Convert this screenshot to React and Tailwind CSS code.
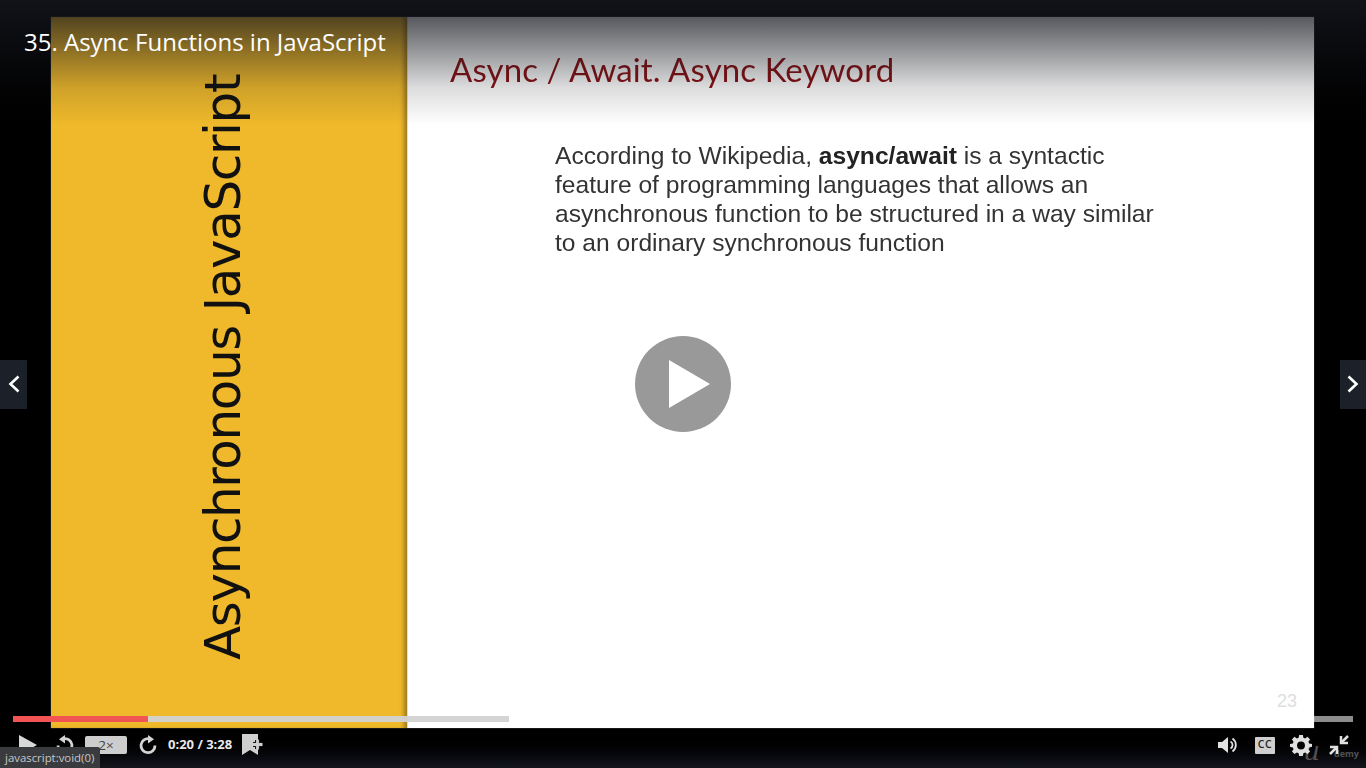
const Gear = () => (
  <svg width="22" height="22" viewBox="0 0 24 24" fill="#e0e0e0">
    <path fillRule="evenodd" d="M10 1h4l.6 3.1 1.900.8L19.100 3.100 21.900 5.900 20.100 8.500l.8 1.900L24 11v3l-3.100.6-.8 1.900 1.800 2.600-2.800 2.800-2.600-1.800-1.900.8L14 24h-4l-.6-3.100-1.900-.8-2.600 1.800-2.800-2.800 1.800-2.600-.8-1.900L0 14v-3l3.100-.6.8-1.900L2.100 5.900 4.900 3.100 7.500 4.900l1.900-.8L10 1zm2 7.200a4.300 4.300 0 1 0 0 8.600 4.300 4.300 0 0 0 0-8.600z" />
  </svg>
)

const RotateArrow = ({ flip }) => (
  <svg width="20" height="20" viewBox="0 0 20 20" className={flip ? '-scale-x-100' : ''} fill="none">
    <path d="M11.500 3.800A7 7 0 1 0 17 10.500" stroke="#d4d4d4" strokeWidth="2.800" />
    <path d="M10 0l6 4.300-6 4.200z" fill="#d4d4d4" />
  </svg>
)

const App = () => {
  return (
    <div className="relative w-[1366px] h-[768px] overflow-hidden bg-black font-['Open_Sans',sans-serif]">
      {/* Slide */}
      <div className="pt-[17px] pl-[51px]">
        <div className="flex w-[1263px] h-[711px] bg-white shadow-[0_0_1px_#8a8a8a]">
          <div className="flex w-[357px] justify-start border-r border-[#f3df9a] bg-[#efb92b] shadow-[inset_-5px_0_4px_-2px_rgba(90,70,20,0.55)]">
            <div className="ml-[142px] mt-[53px] h-[590px] font-['DejaVu_Sans',sans-serif] text-[50px] leading-[60px] text-[#111] blur-[0.6px] [writing-mode:vertical-rl] rotate-180 whitespace-nowrap text-left tracking-[-1.4px]">
              Asynchronous JavaScript
            </div>
          </div>
          <div className="relative flex-1">
            <h1 className="ml-[42px] mt-[30px] font-['Lato',sans-serif] text-[33px] leading-[44px] text-[#8a1014] blur-[0.5px] tracking-[0.1px] whitespace-nowrap">
              Async / Await. Async Keyword
            </h1>
            <p className="ml-[147px] mt-[50px] w-[640px] font-['Liberation_Sans',sans-serif] text-[24.6px] leading-[29px] text-[#333] blur-[0.3px]">
              According to Wikipedia, <b className="text-[#222]">async/await</b> is a syntactic<br />
              feature of programming languages that allows an<br />
              asynchronous function to be structured in a way similar<br />
              to an ordinary synchronous function
            </p>
            <div className="absolute right-[17px] bottom-[16px] font-['Liberation_Sans',sans-serif] text-[18px] leading-[22px] text-[#dedede]">23</div>
          </div>
        </div>
      </div>

      {/* Top shade and title */}
      <div className="absolute inset-x-0 top-0 h-[125px] bg-[linear-gradient(to_bottom,rgba(20,22,29,0.85)_0%,rgba(20,22,29,0.5)_35%,rgba(20,22,29,0.15)_70%,rgba(20,22,29,0)_100%)]" />
      <h2 className="absolute left-[24px] top-[25px] text-[24px] leading-[33px] text-white">35. Async Functions in JavaScript</h2>

      {/* Big play */}
      <div className="absolute left-[635px] top-[336px] flex h-[96px] w-[96px] items-center justify-center rounded-full bg-[#999]">
        <svg width="42" height="48" viewBox="0 0 42 48" className="ml-[13px]"><path d="M0 0l41 24L0 48z" fill="#fff" /></svg>
      </div>

      {/* Prev / next */}
      <div className="absolute left-0 top-[360px] flex h-[49px] w-[27px] items-center justify-center bg-[#1c2129]">
        <svg width="12" height="18" viewBox="0 0 12 18" fill="none" className="mb-[2px]"><path d="M10.500 1.500L2.500 9l8 7.500" stroke="#fff" strokeWidth="2.600" /></svg>
      </div>
      <div className="absolute right-0 top-[360px] flex h-[49px] w-[26px] items-center justify-center bg-[#1c2129]">
        <svg width="12" height="18" viewBox="0 0 12 18" fill="none" className="mb-[2px]"><path d="M1.500 1.500L9.500 9l-8 7.500" stroke="#fff" strokeWidth="2.600" /></svg>
      </div>

      {/* Bottom shade */}
      <div className="absolute inset-x-0 bottom-0 h-[39px] bg-gradient-to-t from-[#14161d] to-black" />

      {/* Progress */}
      <div className="absolute left-[13px] top-[716px] h-[6px] w-[1340px] bg-white/55">
        <div className="absolute inset-y-0 left-0 w-[496px] bg-[#cfcfcf]/90" />
        <div className="absolute inset-y-0 left-0 w-[135px] bg-[#f25454]" />
      </div>

      {/* Watermark */}
      <div className="absolute right-[7px] bottom-[8px] flex items-end text-[#666]/80">
        <span className="font-['DejaVu_Serif',serif] text-[26px] italic leading-[18px]">u</span>
        <span className="ml-[14px] text-[9px] font-bold leading-[12px]">demy</span>
      </div>

      {/* Controls */}
      <div className="absolute inset-x-0 bottom-0 flex h-[40px] items-center pb-[6px] pl-[19px] pr-[16px]">
        <svg width="18" height="20" viewBox="0 0 18 20"><path d="M0 0l18 10L0 20z" fill="#d8d8d8" /></svg>
        <div className="ml-[18px]"><RotateArrow flip /></div>
        <div className="ml-[10px] flex h-[18px] w-[42px] items-center justify-center rounded-[2px] bg-[#cdcdcd] text-[13.500px] text-[#444]">2×</div>
        <div className="ml-[11px]"><RotateArrow /></div>
        <span className="ml-[10px] text-[13px] font-bold text-[#e8e8e8]">0:20 / 3:28</span>
        <svg className="ml-[10px]" width="22" height="22" viewBox="0 0 22 22" fill="none">
          <path d="M0 0h16v21l-8-5-8 5z" fill="#cfcfcf" />
          <path d="M15.500 6v9M11 10.500h9" stroke="#14161d" strokeWidth="5" />
          <path d="M15.500 5.500v10M10.500 10.500h10" stroke="#cfcfcf" strokeWidth="2.800" />
        </svg>
        <div className="ml-auto flex items-center">
          <svg width="20" height="18" viewBox="0 0 20 18" fill="none">
            <path d="M0 6h4l6-5v16l-6-5H0z" fill="#e0e0e0" />
            <path d="M12.500 5.500a4 4 0 0 1 0 7M14.500 2.500a8 8 0 0 1 0 13" stroke="#e0e0e0" strokeWidth="1.800" />
          </svg>
          <div className="ml-[17px] flex h-[17px] w-[20px] items-center justify-center rounded-[1px] bg-[#cfcfcf] text-[10.500px] font-semibold tracking-[0.6px] text-[#222]">CC</div>
          <div className="ml-[15px]"><Gear /></div>
          <svg className="ml-[16px]" width="22" height="22" viewBox="0 0 22 22" fill="none">
            <path d="M13 2v7h7" stroke="#e0e0e0" strokeWidth="2.500" />
            <path d="M13.500 8.500L20 2" stroke="#e0e0e0" strokeWidth="2.500" />
            <path d="M2 13h7v7" stroke="#e0e0e0" strokeWidth="2.500" />
            <path d="M8.500 13.500L2 20" stroke="#e0e0e0" strokeWidth="2.500" />
          </svg>
        </div>
      </div>

      {/* Link status */}
      <div className="absolute bottom-0 left-0 flex h-[21px] w-[100px] items-center rounded-tr-[2px] bg-[#393b3e] pl-[5px] text-[11.400px] text-[#c8c8c8]">javascript:void(0)</div>
    </div>
  )
}

export default App
